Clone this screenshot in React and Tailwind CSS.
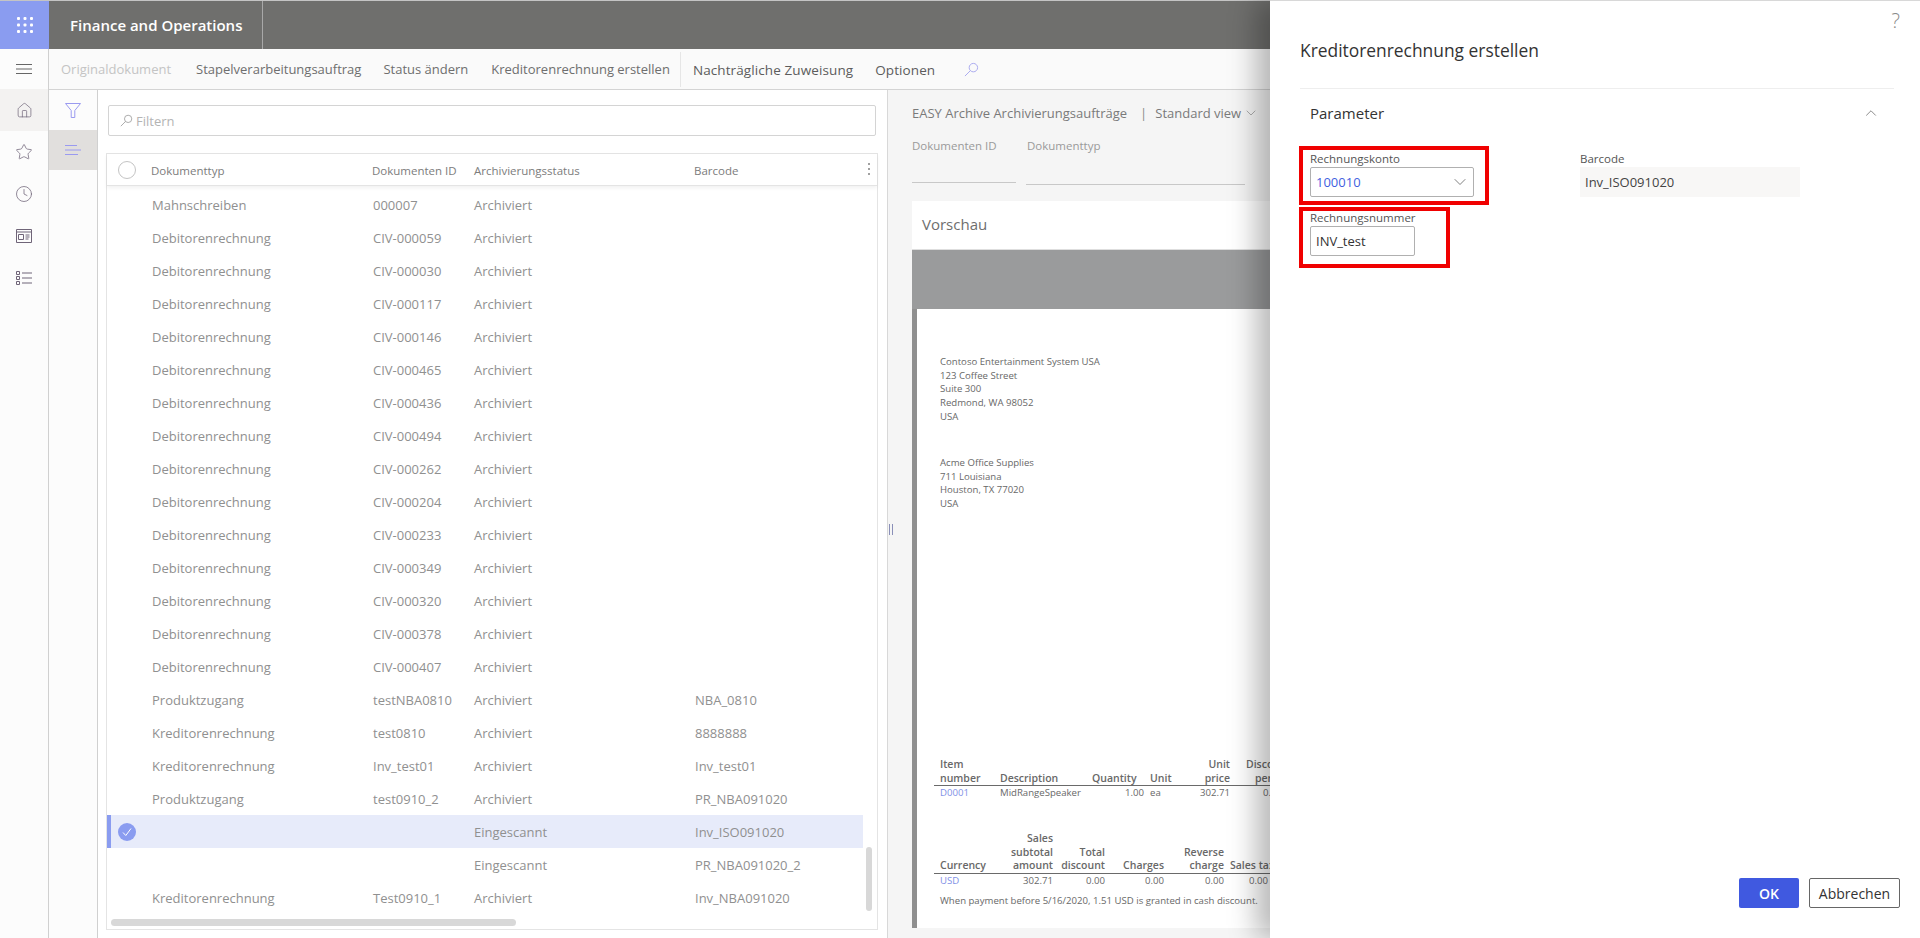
import { Home, Star, Clock, ChevronDown, ChevronUp } from 'lucide-react';

const rows = [
  ['Mahnschreiben', '000007', 'Archiviert', ''],
  ['Debitorenrechnung', 'CIV-000059', 'Archiviert', ''],
  ['Debitorenrechnung', 'CIV-000030', 'Archiviert', ''],
  ['Debitorenrechnung', 'CIV-000117', 'Archiviert', ''],
  ['Debitorenrechnung', 'CIV-000146', 'Archiviert', ''],
  ['Debitorenrechnung', 'CIV-000465', 'Archiviert', ''],
  ['Debitorenrechnung', 'CIV-000436', 'Archiviert', ''],
  ['Debitorenrechnung', 'CIV-000494', 'Archiviert', ''],
  ['Debitorenrechnung', 'CIV-000262', 'Archiviert', ''],
  ['Debitorenrechnung', 'CIV-000204', 'Archiviert', ''],
  ['Debitorenrechnung', 'CIV-000233', 'Archiviert', ''],
  ['Debitorenrechnung', 'CIV-000349', 'Archiviert', ''],
  ['Debitorenrechnung', 'CIV-000320', 'Archiviert', ''],
  ['Debitorenrechnung', 'CIV-000378', 'Archiviert', ''],
  ['Debitorenrechnung', 'CIV-000407', 'Archiviert', ''],
  ['Produktzugang', 'testNBA0810', 'Archiviert', 'NBA_0810'],
  ['Kreditorenrechnung', 'test0810', 'Archiviert', '8888888'],
  ['Kreditorenrechnung', 'Inv_test01', 'Archiviert', 'Inv_test01'],
  ['Produktzugang', 'test0910_2', 'Archiviert', 'PR_NBA091020'],
  ['', '', 'Eingescannt', 'Inv_ISO091020'],
  ['', '', 'Eingescannt', 'PR_NBA091020_2'],
  ['Kreditorenrechnung', 'Test0910_1', 'Archiviert', 'Inv_NBA091020'],
];

const SELECTED = 19;

function SearchGlyph({ className }) {
  return (
    <svg viewBox="0 0 16 16" className={className} fill="none" stroke="currentColor" strokeWidth="1">
      <circle cx="10" cy="6" r="4.5" />
      <path d="M6.7 9.3 1 15" />
    </svg>
  );
}

function Waffle() {
  const dots = [1.5, 8, 14.5];
  return (
    <svg viewBox="0 0 16 16" className="h-4 w-4" fill="#fff">
      {dots.map((y) => dots.map((x) => <rect key={`${x}-${y}`} x={x - 1.5} y={y - 1.5} width="3" height="3" rx="1" />))}
    </svg>
  );
}

function Lines({ className }) {
  return (
    <svg viewBox="0 0 16 12" className={className} fill="none" stroke="currentColor" strokeWidth="1">
      <path d="M0 1.5h16M0 6h16M0 10.5h16" />
    </svg>
  );
}

function NavButton({ active, children }) {
  return (
    <div className={`flex h-[42px] items-center justify-center ${active ? 'bg-[#f3f2f1]' : ''}`}>{children}</div>
  );
}

function Workspace() {
  return (
    <svg viewBox="0 0 16 14" className="h-[14px] w-4 text-[#6f6478]" fill="none" stroke="currentColor" strokeWidth="1">
      <path d="M.5.5h15v13H.5zM.5 3h15M2.5 5.5h5v5h-5zM9.5 6h4M9.5 8h4M9.5 10h3" />
    </svg>
  );
}

function ModuleList() {
  return (
    <svg viewBox="0 0 16 14" className="h-[14px] w-4 text-[#6f6478]" fill="none" stroke="currentColor" strokeWidth="1">
      <path d="M.5.5h3v3h-3zM.5 5.5h3v3h-3zM.5 10.5h3v3h-3zM6 2h10M6 7h10M6 12h10" />
    </svg>
  );
}

function LeftNav() {
  return (
    <div className="flex w-[49px] shrink-0 flex-col border-r border-[#d0d0d0] bg-[#fcfcfc]">
      <div className="flex h-10 items-center justify-center">
        <Lines className="h-3 w-4 text-[#666]" />
      </div>
      <NavButton active>
        <Home size={17} strokeWidth={1} className="text-[#6f6478]" />
      </NavButton>
      <NavButton>
        <Star size={18} strokeWidth={1} className="text-[#6f6478]" />
      </NavButton>
      <NavButton>
        <Clock size={18} strokeWidth={1} className="text-[#6f6478]" />
      </NavButton>
      <NavButton>
        <Workspace />
      </NavButton>
      <NavButton>
        <ModuleList />
      </NavButton>
    </div>
  );
}

function ActionBar() {
  return (
    <div className="flex h-[41px] shrink-0 items-center border-b border-[#d4d4d4] bg-[#fafafa] pl-3 text-[13px] text-[#6e6e6e]">
      <span className="pt-[2px] text-[#c4c4c4]">Originaldokument</span>
      <span className="ml-[25px] pt-[2px]">Stapelverarbeitungsauftrag</span>
      <span className="ml-[22px] pt-[2px]">Status ändern</span>
      <span className="ml-[23px] pt-[2px]">Kreditorenrechnung erstellen</span>
      <span className="ml-[10px] h-[35px] w-px bg-[#e6e6e6]" />
      <span className="ml-[12px] pt-[2px] text-[13.5px] font-medium tracking-[0.1px] text-[#5c5c5c]">Nachträgliche Zuweisung</span>
      <span className="ml-[22px] pt-[2px] text-[13.5px] font-medium tracking-[0.1px] text-[#5c5c5c]">Optionen</span>
      <SearchGlyph className="ml-[29px] h-[15px] w-[15px] text-[#a6a6ee]" />
    </div>
  );
}

function RowCheck() {
  return (
    <span className="flex h-[18px] w-[18px] items-center justify-center rounded-full bg-[#8a9cf0]">
      <svg viewBox="0 0 12 12" className="h-3 w-3" fill="none" stroke="#fff" strokeWidth="1">
        <path d="M2 6.5 4.8 9.5 10 2.5" />
      </svg>
    </span>
  );
}

function DocumentList() {
  return (
    <div className="flex w-[790px] shrink-0 flex-col border-r border-[#d8d8d8] bg-white pt-[15px] pl-[10px]">
      <div className="flex h-[31px] w-[768px] items-center rounded-[2px] border border-[#d4d4d4] pl-[11px] text-[13px] text-[#b4b4b4]">
        <SearchGlyph className="h-[13px] w-[13px] text-[#9a9a9a]" />
        <span className="ml-[3px] pt-[2px]">Filtern</span>
      </div>
      <div className="relative mt-[17px] ml-[-2px] h-[777px] w-[772px] border border-[#e4e4e4]">
        <div className="relative z-10 flex h-[32px] items-center border-b border-[#e4e4e4] bg-white pt-[2px] text-[11.5px] font-medium text-[#7c7c7c] shadow-[0_2px_4px_rgba(0,0,0,0.06)]">
          <span className="mb-[2px] ml-[11px] h-[18px] w-[18px] rounded-full border border-[#c4c4c4]" />
          <span className="ml-[15px] w-[221px]">Dokumenttyp</span>
          <span className="w-[102px]">Dokumenten ID</span>
          <span className="w-[220px]">Archivierungsstatus</span>
          <span>Barcode</span>
          <span className="absolute top-[9px] right-[7px] flex flex-col gap-[3px]">
            <i className="h-[2px] w-[2px] bg-[#a0a0a0]" />
            <i className="h-[2px] w-[2px] bg-[#a0a0a0]" />
            <i className="h-[2px] w-[2px] bg-[#a0a0a0]" />
          </span>
        </div>
        <div className="pt-[2px]">
          {rows.map((row, i) => (
            <div
              key={i}
              className={`flex h-[33px] w-[756px] items-center pt-[2px] text-[13px] text-[#909090] ${
                i === SELECTED ? 'border-l-4 border-[#8a9cf0] bg-[#e7ebfa]' : 'pl-1'
              }`}
            >
              <span className="mb-[2px] flex w-[41px] shrink-0 pl-[7px]">
                {i === SELECTED && <RowCheck />}
              </span>
              <span className="w-[221px]">{row[0]}</span>
              <span className="w-[101px]">{row[1]}</span>
              <span className="w-[221px]">{row[2]}</span>
              <span>{row[3]}</span>
            </div>
          ))}
        </div>
        <div className="absolute top-[693px] right-[5px] h-[64px] w-[6px] rounded bg-[#d8d8d8]" />
        <div className="absolute bottom-[3px] left-[4px] h-[7px] w-[405px] rounded bg-[#d8d8d8]" />
      </div>
    </div>
  );
}

function AddressBlock({ lines, className }) {
  return (
    <div className={className}>
      {lines.map((line) => (
        <div key={line} className="h-[13.6px] leading-[13.6px]">{line}</div>
      ))}
    </div>
  );
}

function InvoicePaper() {
  return (
    <div className="flex h-[619px] w-[400px] flex-col border-l-[5px] border-[#8f8f8f] bg-white pt-[46px] pl-[23px] text-[9.6px] text-[#686868]">
      <AddressBlock
        lines={['Contoso Entertainment System USA', '123 Coffee Street', 'Suite 300', 'Redmond, WA 98052', 'USA']}
      />
      <AddressBlock
        className="mt-[33px]"
        lines={['Acme Office Supplies', '711 Louisiana', 'Houston, TX 77020', 'USA']}
      />
      <div className="mt-[248px] ml-[-6px] flex h-[27px] items-end border-b border-[#6a6a6a] pl-[6px] text-[10.5px] leading-[14px] font-semibold whitespace-nowrap">
        <span className="w-[60px]">Item<br />number</span>
        <span className="w-[92px]">Description</span>
        <span className="w-[52px]">Quantity</span>
        <span className="ml-[6px] w-[30px]">Unit</span>
        <span className="w-[50px] text-right">Unit<br />price</span>
        <span className="ml-[16px] w-[30px]">Disco<br /><span className="ml-[9px]">per</span></span>
      </div>
      <div className="flex h-[15px] items-center whitespace-nowrap">
        <span className="w-[60px] text-[#7f90e6]">D0001</span>
        <span className="w-[92px]">MidRangeSpeaker</span>
        <span className="w-[52px] text-right">1.00</span>
        <span className="ml-[6px] w-[30px]">ea</span>
        <span className="w-[50px] text-right">302.71</span>
        <span className="ml-[33px]">0.00</span>
      </div>
      <div className="mt-[32px] ml-[-6px] flex h-[41px] items-end border-b border-[#6a6a6a] pl-[6px] text-[10.5px] leading-[13.5px] font-semibold whitespace-nowrap">
        <span className="w-[55px]">Currency</span>
        <span className="w-[58px] text-right">Sales<br />subtotal<br />amount</span>
        <span className="w-[52px] text-right">Total<br />discount</span>
        <span className="w-[59px] text-right">Charges</span>
        <span className="w-[60px] text-right">Reverse<br />charge</span>
        <span className="ml-[6px]">Sales tax</span>
      </div>
      <div className="flex h-[15px] items-center whitespace-nowrap">
        <span className="w-[55px] text-[#7f90e6]">USD</span>
        <span className="w-[58px] text-right">302.71</span>
        <span className="w-[52px] text-right">0.00</span>
        <span className="w-[59px] text-right">0.00</span>
        <span className="w-[60px] text-right">0.00</span>
        <span className="w-[44px] text-right">0.00</span>
      </div>
      <div className="mt-[5px] whitespace-nowrap">When payment before 5/16/2020, 1.51 USD is granted in cash discount.</div>
    </div>
  );
}

function PreviewPane() {
  return (
    <div className="relative min-w-0 flex-1 bg-[#f5f5f5] pl-[24px]">
      <div className="absolute top-[434px] left-[1px] flex h-[11px] w-[4px] justify-between">
        <i className="h-[11px] w-px bg-[#8a8fb8]" />
        <i className="h-[11px] w-px bg-[#8a8fb8]" />
      </div>
      <div className="flex h-[33px] items-end text-[13px] text-[#7a7a7a]">
        EASY Archive Archivierungsaufträge
        <span className="mr-[8px] ml-[13px] text-[#8a8a8a]">|</span>
        Standard view
        <ChevronDown size={16} strokeWidth={1} className="mb-[2px] ml-[2px] text-[#888]" />
      </div>
      <div className="mt-[14px] flex text-[11.5px] text-[#9a9a9a]">
        <span className="w-[115px]">Dokumenten ID</span>
        <span>Dokumenttyp</span>
      </div>
      <div className="mt-[30px] flex items-start">
        <span className="mt-[-2px] h-px w-[104px] bg-[#c8c8c8]" />
        <span className="ml-[10px] h-px w-[219px] bg-[#c8c8c8]" />
      </div>
      <div className="mt-[16px] flex h-[49px] items-center border-b border-[#dedede] bg-white pb-[2px] pl-[10px] text-[15px] font-medium text-[#6e6e6e]">
        Vorschau
      </div>
      <div className="h-[59px] bg-[#9a9b9c]" />
      <InvoicePaper />
    </div>
  );
}

function RedBox({ className, children }) {
  return <div className={`border-4 border-[#f00000] pl-[7px] ${className}`}>{children}</div>;
}

function Field({ label, className, valueClass, children }) {
  return (
    <div className={className}>
      <div className="h-[15px] text-[11.5px] leading-[13px] text-[#555]">{label}</div>
      <div className={`flex h-[30px] items-center pl-[5px] text-[13px] ${valueClass}`}>
        {children}
      </div>
    </div>
  );
}

function DialogPanel() {
  return (
    <div className="absolute top-0 right-0 bottom-0 flex w-[650px] flex-col border-t border-[#d8d8d8] bg-white pr-[26px] pl-[30px] shadow-[-14px_0_26px_rgba(0,0,0,0.28)]">
      <span className="absolute top-[6px] right-[20px] text-[20px] leading-[28px] font-light text-[#8a8a8a]">?</span>
      <div className="flex h-[88px] items-start border-b border-[#eeeeee] pt-[35px] text-[17.4px] leading-[28px] text-[#333]">
        Kreditorenrechnung erstellen
      </div>
      <div className="flex h-[48px] items-center justify-between pr-[14px] pl-[10px] text-[15px] font-medium text-[#333]">
        Parameter
        <ChevronUp size={18} strokeWidth={1} className="text-[#666]" />
      </div>
      <div className="mt-[9px] ml-[-1px] flex items-start">
        <div className="flex flex-col">
          <RedBox className="h-[59px] w-[190px] pt-[2px]">
            <Field label="Rechnungskonto" className="w-[164px]" valueClass="rounded-[2px] border border-[#b0b0b0] text-[#3f5fe0] justify-between pr-[3px]">
              <span className="pt-[2px]">100010</span>
              <ChevronDown size={20} strokeWidth={1} className="text-[#666]" />
            </Field>
          </RedBox>
          <RedBox className="mt-[2px] h-[61px] w-[151px]">
            <Field label="Rechnungsnummer" className="w-[105px]" valueClass="rounded-[2px] border border-[#b0b0b0] text-[#333]">
              <span className="pt-[2px]">INV_test</span>
            </Field>
          </RedBox>
        </div>
        <Field label="Barcode" className="ml-[91px] w-[220px] pt-[6px]" valueClass="bg-[#f8f7f6] text-[#444]">
          <span className="pt-[2px]">Inv_ISO091020</span>
        </Field>
      </div>
      <div className="mt-auto mr-[-6px] mb-[30px] flex justify-end gap-[10px] text-[14px]">
        <button className="h-[30px] w-[60px] rounded-[2px] bg-[#4059e0] font-semibold text-white">OK</button>
        <button className="h-[30px] w-[91px] rounded-[2px] border border-[#666] bg-white text-[#333]">Abbrechen</button>
      </div>
    </div>
  );
}

export default function App() {
  return (
    <div className="relative h-[938px] w-[1920px] overflow-hidden bg-white font-['Open_Sans','Liberation_Sans',sans-serif]">
      <div className="h-px bg-[#c4c4c4]" />
      <header className="flex h-12 bg-[#6f6f6d]">
        <div className="flex w-[49px] items-center justify-center bg-[#8a9cf0]">
          <Waffle />
        </div>
        <div className="flex w-[214px] items-center border-r border-[#a8a8a8] pl-[21px] text-[15px] font-semibold text-white">
          Finance and Operations
        </div>
      </header>
      <div className="flex h-[889px]">
        <LeftNav />
        <div className="flex min-w-0 flex-1 flex-col">
          <ActionBar />
          <div className="flex min-h-0 flex-1">
            <div className="w-[49px] shrink-0 border-r border-[#d0d0d0] bg-[#fcfcfc]">
              <div className="flex h-10 items-center justify-center">
                <svg viewBox="0 0 16 15" className="h-[15px] w-4 text-[#9a9af0]" fill="none" stroke="currentColor" strokeWidth="1">
                  <path d="M.5.5h15L9.8 7.5v7H6.2v-7z" />
                </svg>
              </div>
              <div className="flex h-10 items-center justify-center bg-[#e1dfdd]">
                <svg viewBox="0 0 16 10" className="h-[10px] w-4 text-[#9a9af0]" fill="none" stroke="currentColor" strokeWidth="1">
                  <path d="M0 .5h12M0 5h16M0 9.5h13" />
                </svg>
              </div>
            </div>
            <DocumentList />
            <PreviewPane />
          </div>
        </div>
      </div>
      <DialogPanel />
    </div>
  );
}
